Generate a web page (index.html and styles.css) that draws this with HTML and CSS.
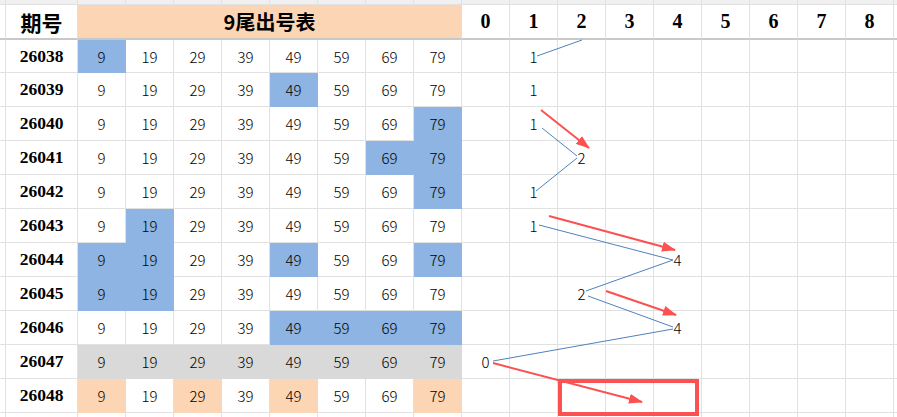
FILE: index.html
```html
<!DOCTYPE html>
<html>
<head>
<meta charset="utf-8">
<link rel="stylesheet" href="styles.css">
</head>
<body>
<div class="sheet">
  <div class="r top"><i class="e"></i><i class="id"></i><i></i><i></i><i></i><i></i><i></i><i></i><i></i><i></i><i></i><i></i><i></i><i></i><i></i><i></i><i></i><i></i><i></i><i class="t"></i></div>
  <div class="r hd"><i class="e"></i><div class="id h">期号</div><div class="title">9尾出号表</div><div class="n">0</div><div class="n">1</div><div class="n">2</div><div class="n">3</div><div class="n">4</div><div class="n">5</div><div class="n">6</div><div class="n">7</div><div class="n">8</div><i class="t"></i></div>
  <div class="r first"><i class="e"></i><div class="id">26038</div><div class="b">9</div><div>19</div><div>29</div><div>39</div><div>49</div><div>59</div><div>69</div><div>79</div><div></div><div>1</div><div></div><div></div><div></div><div></div><div></div><div></div><div></div><i class="t"></i></div>
  <div class="r"><i class="e"></i><div class="id">26039</div><div>9</div><div>19</div><div>29</div><div>39</div><div class="b">49</div><div>59</div><div>69</div><div>79</div><div></div><div>1</div><div></div><div></div><div></div><div></div><div></div><div></div><div></div><i class="t"></i></div>
  <div class="r"><i class="e"></i><div class="id">26040</div><div>9</div><div>19</div><div>29</div><div>39</div><div>49</div><div>59</div><div>69</div><div class="b">79</div><div></div><div>1</div><div></div><div></div><div></div><div></div><div></div><div></div><div></div><i class="t"></i></div>
  <div class="r"><i class="e"></i><div class="id">26041</div><div>9</div><div>19</div><div>29</div><div>39</div><div>49</div><div>59</div><div class="b">69</div><div class="b">79</div><div></div><div></div><div>2</div><div></div><div></div><div></div><div></div><div></div><div></div><i class="t"></i></div>
  <div class="r"><i class="e"></i><div class="id">26042</div><div>9</div><div>19</div><div>29</div><div>39</div><div>49</div><div>59</div><div>69</div><div class="b">79</div><div></div><div>1</div><div></div><div></div><div></div><div></div><div></div><div></div><div></div><i class="t"></i></div>
  <div class="r"><i class="e"></i><div class="id">26043</div><div>9</div><div class="b">19</div><div>29</div><div>39</div><div>49</div><div>59</div><div>69</div><div>79</div><div></div><div>1</div><div></div><div></div><div></div><div></div><div></div><div></div><div></div><i class="t"></i></div>
  <div class="r"><i class="e"></i><div class="id">26044</div><div class="b">9</div><div class="b">19</div><div>29</div><div>39</div><div class="b">49</div><div>59</div><div>69</div><div class="b">79</div><div></div><div></div><div></div><div></div><div>4</div><div></div><div></div><div></div><div></div><i class="t"></i></div>
  <div class="r"><i class="e"></i><div class="id">26045</div><div class="b">9</div><div class="b">19</div><div>29</div><div>39</div><div>49</div><div>59</div><div>69</div><div>79</div><div></div><div></div><div>2</div><div></div><div></div><div></div><div></div><div></div><div></div><i class="t"></i></div>
  <div class="r"><i class="e"></i><div class="id">26046</div><div>9</div><div>19</div><div>29</div><div>39</div><div class="b">49</div><div class="b">59</div><div class="b">69</div><div class="b">79</div><div></div><div></div><div></div><div></div><div>4</div><div></div><div></div><div></div><div></div><i class="t"></i></div>
  <div class="r"><i class="e"></i><div class="id">26047</div><div class="g">9</div><div class="g">19</div><div class="g">29</div><div class="g">39</div><div class="g">49</div><div class="g">59</div><div class="g">69</div><div class="g">79</div><div>0</div><div></div><div></div><div></div><div></div><div></div><div></div><div></div><div></div><i class="t"></i></div>
  <div class="r"><i class="e"></i><div class="id">26048</div><div class="p">9</div><div>19</div><div class="p">29</div><div>39</div><div class="p">49</div><div>59</div><div>69</div><div class="p">79</div><div></div><div></div><div></div><div></div><div></div><div></div><div></div><div></div><div></div><i class="t"></i></div>
  <div class="r bot"><i class="e"></i><i class="id"></i><i></i><i></i><i></i><i></i><i></i><i></i><i></i><i></i><i></i><i></i><i></i><i></i><i></i><i></i><i></i><i></i><i></i><i class="t"></i></div>

  <svg class="ov" width="897" height="417" viewBox="0 0 897 417">
    <defs>
      <marker id="ah" markerUnits="userSpaceOnUse" markerWidth="14" markerHeight="10" refX="13" refY="5" orient="auto">
        <path d="M0,0 L14,5 L0,10 Z" fill="#fb5150"/>
      </marker>
    </defs>
    <g stroke="#4f81bd" stroke-width="1" fill="none">
      <line x1="537" y1="56" x2="582" y2="40"/>
      <line x1="542" y1="128" x2="577" y2="156"/>
      <line x1="577" y1="158" x2="536" y2="191"/>
      <line x1="539" y1="225" x2="673" y2="260"/>
      <line x1="673" y1="260" x2="586" y2="291"/>
      <line x1="588" y1="296" x2="673" y2="327"/>
      <line x1="673" y1="329" x2="493" y2="361"/>
    </g>
    <g stroke="#fb5150" stroke-width="2" fill="none">
      <line x1="541" y1="110" x2="589" y2="148" marker-end="url(#ah)"/>
      <line x1="549" y1="216" x2="675" y2="250" marker-end="url(#ah)"/>
      <line x1="606" y1="291" x2="676" y2="315" marker-end="url(#ah)"/>
      <line x1="493" y1="363" x2="642" y2="402" marker-end="url(#ah)"/>
      <rect x="560" y="381" width="137" height="33" stroke-width="4"/>
    </g>
  </svg>
</div>
</body>
</html>
```

FILE: styles.css
```css
body {
  margin: 0;
  background: #fff;
  font-family: "Noto Sans CJK SC", sans-serif;
}

.sheet {
  position: relative;
  width: 897px;
  height: 417px;
  overflow: hidden;
}

.r {
  display: flex;
  height: 34px;
}

.r > * {
  flex: none;
  box-sizing: border-box;
  width: 48px;
  border-right: 1px solid #e1e1e1;
  border-bottom: 1px solid #e1e1e1;
  display: flex;
  align-items: center;
  justify-content: center;
  font-size: 15px;
  font-weight: 300;
  color: #000;
  font-style: normal;
}

.r > .e {
  width: 6px;
}

.r > .id {
  width: 72px;
  font-family: "Liberation Serif", serif;
  font-weight: 700;
  font-size: 17.5px;
}

.r > .t {
  flex: 1;
  border-right: 0;
}

.top {
  height: 5px;
  background: #f0f0f0;
}

.bot {
  height: 5px;
}

.first {
  height: 33px;
}

.hd {
  height: 35px;
}

.hd > * {
  border-bottom: 2px solid #c8c8c8;
}

.r > .id.h {
  font-family: "Noto Sans CJK SC", sans-serif;
  font-size: 21px;
  font-weight: 700;
}

.r > .title {
  width: 384px;
  background: #fcd5b4;
  border-right-color: #fcd5b4;
  font-weight: 700;
  font-size: 20px;
}

.r > .n {
  font-family: "Liberation Serif", serif;
  font-weight: 700;
  font-size: 20px;
}

.r > .b {
  background: #8db4e2;
  border-right-color: #8db4e2;
  border-bottom-color: #8db4e2;
}

.r > .g {
  background: #d9d9d9;
  border-right-color: #d9d9d9;
  border-bottom-color: #d9d9d9;
}

.r > .p {
  background: #fcd5b4;
  border-right-color: #fcd5b4;
  border-bottom-color: #fcd5b4;
}

.ov {
  position: absolute;
  left: 0;
  top: 0;
  pointer-events: none;
}
```
